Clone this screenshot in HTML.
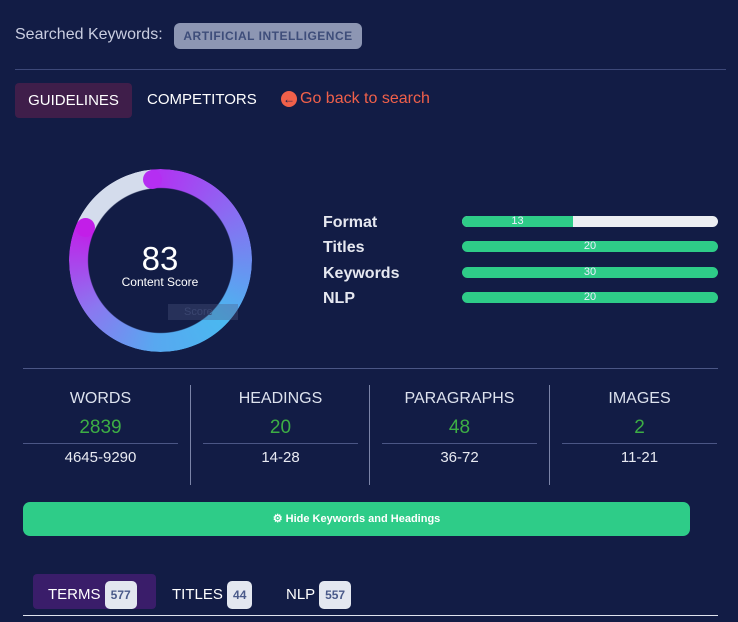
<!DOCTYPE html>
<html><head><meta charset="utf-8"><style>
*{margin:0;padding:0;box-sizing:border-box}
body{width:738px;height:622px;background:#121c45;font-family:"Liberation Sans",sans-serif;position:relative;overflow:hidden;color:#fff}
.a{position:absolute}
.c{text-align:center}
.bar{position:absolute;left:462px;width:256px;height:11px;border-radius:6px;background:#2ecc88;font-size:11px;line-height:11px;color:#eef;text-align:center}
.lbl{position:absolute;left:323px;font-weight:bold;font-size:16px;color:#e6e8f0}
.col{position:absolute;top:390px;width:155px;text-align:center}
.col .h{font-size:16px;color:#dde2ee}
.col .v{font-size:19px;color:#3dae45;margin-top:9px}
.col .ln{height:1px;background:#4b5685;margin-top:4px}
.col .r{font-size:15px;color:#e8eaf2;margin-top:5px}
.vl{position:absolute;top:385px;width:1px;height:100px;background:#7b84a8}
.badge{display:inline-block;background:#e3e7f0;color:#4a5a8a;font-size:12px;font-weight:bold;border-radius:5px;padding:4px 6px;vertical-align:middle;margin-left:0px}
</style></head><body>
<div class="a" style="left:15px;top:26px;font-size:16px;color:#c9cde0">Searched Keywords:</div>
<div class="a" style="left:174px;top:23px;width:188px;height:26px;border-radius:6px;background:#8d96b3;color:#3e4d7a;font-size:12px;font-weight:bold;line-height:26px;text-align:center;letter-spacing:0.5px">ARTIFICIAL INTELLIGENCE</div>
<div class="a" style="left:15px;top:69px;width:711px;height:1px;background:#3d4878"></div>
<div class="a" style="left:15px;top:83px;width:117px;height:35px;border-radius:4px;background:#3f1e4a;font-size:15px;line-height:35px;text-align:center">GUIDELINES</div>
<div class="a" style="left:147px;top:91px;font-size:15px">COMPETITORS</div>
<div class="a" style="left:281px;top:91px;width:16px;height:16px;border-radius:50%;background:#f0604a;color:#121c45;font-size:12px;line-height:16px;text-align:center;font-weight:bold">←</div>
<div class="a" style="left:300px;top:90px;font-size:16px;color:#f0604a">Go back to search</div>

<div class="a" style="left:69px;top:169px;width:183px;height:183px;border-radius:50%;background:conic-gradient(from -6deg,#b52ef2 0deg,#8b6af2 60deg,#4ab8f0 140deg,#58a8f0 190deg,#8a78f0 240deg,#c21ee8 300deg,#d4dcec 301deg,#d4dcec 360deg);-webkit-mask:radial-gradient(circle,transparent 72px,#000 73px);mask:radial-gradient(circle,transparent 72px,#000 73px)"></div>
<div class="a" style="left:143px;top:170px;width:19px;height:19px;border-radius:50%;background:#b52ef2"></div>
<div class="a" style="left:76px;top:218px;width:19px;height:19px;border-radius:50%;background:#c21ee8"></div>
<div class="a c" style="left:100px;top:241px;width:120px;font-size:33px;line-height:36px">83</div>
<div class="a c" style="left:100px;top:275px;width:120px;font-size:12px">Content Score</div>
<div class="a" style="left:168px;top:304px;width:70px;height:16px;background:rgba(80,90,130,0.35);font-size:11px;color:#3b4670;line-height:16px;padding-left:16px">Score</div>

<div class="lbl" style="top:214px">Format</div>
<div class="lbl" style="top:239px">Titles</div>
<div class="lbl" style="top:265px">Keywords</div>
<div class="lbl" style="top:290px">NLP</div>
<div class="bar" style="top:216px;background:#eceef2"><div style="width:111px;height:11px;border-radius:6px 0 0 6px;background:#2ecc88">13</div></div>
<div class="bar" style="top:241px">20</div>
<div class="bar" style="top:267px">30</div>
<div class="bar" style="top:292px">20</div>

<div class="a" style="left:23px;top:368px;width:695px;height:1px;background:#4b5685"></div>
<div class="col" style="left:23px"><div class="h">WORDS</div><div class="v">2839</div><div class="ln"></div><div class="r">4645-9290</div></div>
<div class="vl" style="left:190px"></div>
<div class="col" style="left:203px"><div class="h">HEADINGS</div><div class="v">20</div><div class="ln"></div><div class="r">14-28</div></div>
<div class="vl" style="left:369px"></div>
<div class="col" style="left:382px"><div class="h">PARAGRAPHS</div><div class="v">48</div><div class="ln"></div><div class="r">36-72</div></div>
<div class="vl" style="left:549px"></div>
<div class="col" style="left:562px"><div class="h">IMAGES</div><div class="v">2</div><div class="ln"></div><div class="r">11-21</div></div>

<div class="a" style="left:23px;top:502px;width:667px;height:34px;border-radius:7px;background:#2ecc88;text-align:center;line-height:34px;font-size:11px;font-weight:bold">⚙ Hide Keywords and Headings</div>

<div class="a" style="left:33px;top:574px;width:123px;height:35px;border-radius:4px;background:#3a1d6a"></div>
<div class="a" style="left:48px;top:581px;font-size:15px;line-height:20px">TERMS <span class="badge">577</span></div>
<div class="a" style="left:172px;top:581px;font-size:15px;line-height:20px">TITLES <span class="badge">44</span></div>
<div class="a" style="left:286px;top:581px;font-size:15px;line-height:20px">NLP <span class="badge">557</span></div>
<div class="a" style="left:23px;top:615px;width:695px;height:1px;background:#dfe3ee"></div>
</body></html>
